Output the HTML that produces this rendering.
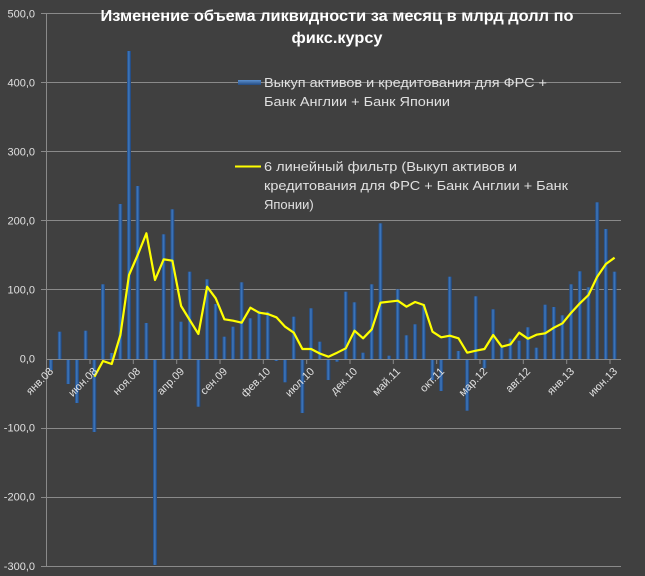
<!DOCTYPE html>
<html><head><meta charset="utf-8"><style>
html,body{margin:0;padding:0;background:#404040;}
svg{display:block;font-family:"Liberation Sans","DejaVu Sans",sans-serif;}
</style></head><body>
<svg width="645" height="576" viewBox="0 0 645 576" xmlns="http://www.w3.org/2000/svg">
<defs>
<linearGradient id="b" x1="0" x2="1" y1="0" y2="0">
<stop offset="0" stop-color="#22487c"/><stop offset="0.45" stop-color="#3f7ac2"/><stop offset="1" stop-color="#1d4174"/>
</linearGradient>
<linearGradient id="lg" x1="0" x2="0" y1="0" y2="1">
<stop offset="0" stop-color="#5a90d0"/><stop offset="1" stop-color="#234a80"/>
</linearGradient>
</defs>
<rect width="645" height="576" fill="#404040"/>
<g stroke="#8a8a8a" stroke-width="1">
<line x1="41" x2="621" y1="13.5" y2="13.5"/>
<line x1="41" x2="621" y1="82.5" y2="82.5"/>
<line x1="41" x2="621" y1="151.5" y2="151.5"/>
<line x1="41" x2="621" y1="220.5" y2="220.5"/>
<line x1="41" x2="621" y1="289.5" y2="289.5"/>
<line x1="41" x2="621" y1="428.5" y2="428.5"/>
<line x1="41" x2="621" y1="497.5" y2="497.5"/>
<line x1="41" x2="621" y1="566.5" y2="566.5"/>
<line x1="46.5" x2="46.5" y1="13" y2="567"/>
</g>
<g fill="#e0e0e0" font-size="11" text-anchor="end">
<text x="35" y="17.5">500,0</text>
<text x="35" y="86.5">400,0</text>
<text x="35" y="155.5">300,0</text>
<text x="35" y="224.5">200,0</text>
<text x="35" y="293.5">100,0</text>
<text x="35" y="362.5">0,0</text>
<text x="35" y="431.5">-100,0</text>
<text x="35" y="500.5">-200,0</text>
<text x="35" y="570">-300,0</text>
</g>
<g fill="url(#b)">
<rect x="49.0" y="359" width="4" height="11"/>
<rect x="57.7" y="331.7" width="4" height="27.3"/>
<rect x="66.3" y="359" width="4" height="25"/>
<rect x="75.0" y="359" width="4" height="44"/>
<rect x="83.7" y="330.7" width="4" height="28.3"/>
<rect x="92.4" y="359" width="4" height="73"/>
<rect x="101.0" y="284.3" width="4" height="74.7"/>
<rect x="109.7" y="353" width="4" height="6"/>
<rect x="118.4" y="204" width="4" height="155"/>
<rect x="127.0" y="51" width="4" height="308"/>
<rect x="135.7" y="186" width="4" height="173"/>
<rect x="144.4" y="323" width="4" height="36"/>
<rect x="153.0" y="359" width="4" height="206"/>
<rect x="161.7" y="234.3" width="4" height="124.7"/>
<rect x="170.4" y="209.3" width="4" height="149.7"/>
<rect x="179.1" y="321.7" width="4" height="37.3"/>
<rect x="187.7" y="271.7" width="4" height="87.3"/>
<rect x="196.4" y="359" width="4" height="47.7"/>
<rect x="205.1" y="279.3" width="4" height="79.7"/>
<rect x="213.7" y="304" width="4" height="55"/>
<rect x="222.4" y="336.7" width="4" height="22.3"/>
<rect x="231.1" y="326.7" width="4" height="32.3"/>
<rect x="239.7" y="282.3" width="4" height="76.7"/>
<rect x="248.4" y="318.3" width="4" height="40.7"/>
<rect x="257.1" y="310.7" width="4" height="48.3"/>
<rect x="265.8" y="311.7" width="4" height="47.3"/>
<rect x="274.4" y="359" width="4" height="2"/>
<rect x="283.1" y="359" width="4" height="23.3"/>
<rect x="291.8" y="316.7" width="4" height="42.3"/>
<rect x="300.4" y="359" width="4" height="54"/>
<rect x="309.1" y="308.3" width="4" height="50.7"/>
<rect x="317.8" y="341.7" width="4" height="17.3"/>
<rect x="326.4" y="359" width="4" height="21"/>
<rect x="335.1" y="359" width="4" height="2.7"/>
<rect x="343.8" y="291.7" width="4" height="67.3"/>
<rect x="352.5" y="302.3" width="4" height="56.7"/>
<rect x="361.1" y="352.7" width="4" height="6.3"/>
<rect x="369.8" y="284.3" width="4" height="74.7"/>
<rect x="378.5" y="223.3" width="4" height="135.7"/>
<rect x="387.1" y="355.7" width="4" height="3.3"/>
<rect x="395.8" y="289.3" width="4" height="69.7"/>
<rect x="404.5" y="335.3" width="4" height="23.7"/>
<rect x="413.1" y="324.3" width="4" height="34.7"/>
<rect x="421.8" y="304" width="4" height="55"/>
<rect x="430.5" y="359" width="4" height="21"/>
<rect x="439.2" y="359" width="4" height="32"/>
<rect x="447.8" y="276.7" width="4" height="82.3"/>
<rect x="456.5" y="351" width="4" height="8"/>
<rect x="465.2" y="359" width="4" height="51.7"/>
<rect x="473.8" y="296.3" width="4" height="62.7"/>
<rect x="482.5" y="359" width="4" height="9.3"/>
<rect x="491.2" y="309.3" width="4" height="49.7"/>
<rect x="499.8" y="347.3" width="4" height="11.7"/>
<rect x="508.5" y="338.7" width="4" height="20.3"/>
<rect x="517.2" y="340.7" width="4" height="18.3"/>
<rect x="525.9" y="327.3" width="4" height="31.7"/>
<rect x="534.5" y="347.7" width="4" height="11.3"/>
<rect x="543.2" y="304.7" width="4" height="54.3"/>
<rect x="551.9" y="307" width="4" height="52"/>
<rect x="560.5" y="315.3" width="4" height="43.7"/>
<rect x="569.2" y="284.3" width="4" height="74.7"/>
<rect x="577.9" y="271.3" width="4" height="87.7"/>
<rect x="586.5" y="287.3" width="4" height="71.7"/>
<rect x="595.2" y="202.3" width="4" height="156.7"/>
<rect x="603.9" y="229" width="4" height="130"/>
<rect x="612.6" y="271.7" width="4" height="87.3"/>
</g>
<line x1="46" x2="621" y1="359.5" y2="359.5" stroke="#8a8a8a"/>
<g stroke="#8a8a8a">
<line x1="90" x2="90" y1="359" y2="364"/><line x1="133.3" x2="133.3" y1="359" y2="364"/>
<line x1="176.7" x2="176.7" y1="359" y2="364"/><line x1="220" x2="220" y1="359" y2="364"/>
<line x1="263.3" x2="263.3" y1="359" y2="364"/><line x1="306.7" x2="306.7" y1="359" y2="364"/>
<line x1="350" x2="350" y1="359" y2="364"/><line x1="393.3" x2="393.3" y1="359" y2="364"/>
<line x1="436.7" x2="436.7" y1="359" y2="364"/><line x1="480" x2="480" y1="359" y2="364"/>
<line x1="523.3" x2="523.3" y1="359" y2="364"/><line x1="566.7" x2="566.7" y1="359" y2="364"/>
<line x1="610" x2="610" y1="359" y2="364"/>
</g>
<polyline fill="none" stroke="#ffff00" stroke-width="2.2" stroke-linejoin="round" points="
94.4,376.7 103,361 111.7,364 120.4,335 129,275 137.7,255 146.4,233.3 155,280 163.7,259.3 172.4,260.7 181.1,306 189.7,320 198.4,334 207.1,286.7 215.7,298.3 224.4,319.3 233.1,320.7 241.7,322.7 250.4,307.7 259.1,312.7 267.8,314 276.4,317.3 285.1,326.7 293.8,332.7 302.4,349 311.1,349 319.8,353.5 328.4,356.7 337.1,352.7 345.8,348.3 354.5,330.7 363.1,338.3 371.8,329.3 380.5,302.7 389.1,301.7 397.8,300.7 406.5,306.7 415.1,302 423.8,305 432.5,331.7 441.2,337.3 449.8,335.7 458.5,338.3 467.2,352.7 475.8,350.7 484.5,349 493.2,335 501.8,346.7 510.5,344.3 519.2,332.7 527.9,338.7 536.5,334.7 545.2,333.3 553.9,327.7 562.5,323.3 571.2,312.7 579.9,303.3 588.5,295 597.2,276.7 605.9,264 614.6,257.7"/>
<g fill="#e0e0e0" font-size="11" text-anchor="end">
<text transform="translate(54,372) rotate(-45)">янв.08</text>
<text transform="translate(98,372) rotate(-45)">июн.08</text>
<text transform="translate(141,372) rotate(-45)">ноя.08</text>
<text transform="translate(185,372) rotate(-45)">апр.09</text>
<text transform="translate(228,372) rotate(-45)">сен.09</text>
<text transform="translate(271,372) rotate(-45)">фев.10</text>
<text transform="translate(315,372) rotate(-45)">июл.10</text>
<text transform="translate(358,372) rotate(-45)">дек.10</text>
<text transform="translate(401,372) rotate(-45)">май.11</text>
<text transform="translate(445,372) rotate(-45)">окт.11</text>
<text transform="translate(488,372) rotate(-45)">мар.12</text>
<text transform="translate(531,372) rotate(-45)">авг.12</text>
<text transform="translate(575,372) rotate(-45)">янв.13</text>
<text transform="translate(618,372) rotate(-45)">июн.13</text>
</g>
<g fill="#ffffff" font-weight="bold" font-size="16" text-anchor="middle">
<text x="337" y="21" textLength="473" lengthAdjust="spacingAndGlyphs">Изменение объема ликвидности за месяц в млрд долл по</text>
<text x="337" y="43" textLength="91" lengthAdjust="spacingAndGlyphs">фикс.курсу</text>
</g>
<rect x="238" y="80" width="23" height="5" fill="url(#lg)"/>
<line x1="235" x2="261" y1="166.5" y2="166.5" stroke="#ffff00" stroke-width="2"/>
<g fill="#e0e0e0" font-size="13">
<text x="264" y="87" textLength="283" lengthAdjust="spacingAndGlyphs">Выкуп активов и кредитования для ФРС +</text>
<text x="264" y="106" textLength="186" lengthAdjust="spacingAndGlyphs">Банк Англии + Банк Японии</text>
<text x="264" y="171" textLength="253" lengthAdjust="spacingAndGlyphs">6 линейный фильтр (Выкуп активов и</text>
<text x="264" y="190" textLength="304" lengthAdjust="spacingAndGlyphs">кредитования для ФРС + Банк Англии + Банк</text>
<text x="264" y="209">Японии)</text>
</g>
</svg>
</body></html>
